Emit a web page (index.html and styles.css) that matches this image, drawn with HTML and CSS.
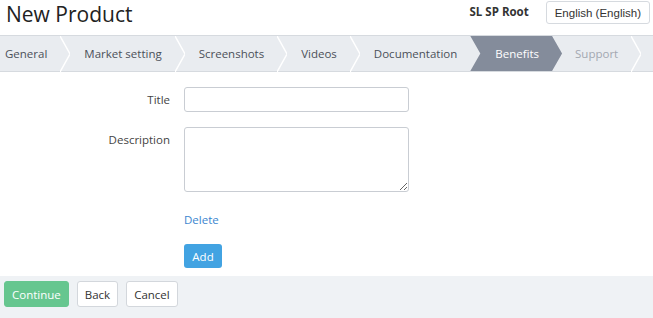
FILE: index.html
```html
<!DOCTYPE html>
<html>
<head>
<meta charset="utf-8">
<link rel="stylesheet" href="styles.css">
</head>
<body>
<header class="top">
  <h1 class="title">New Product</h1>
  <div class="account">
    <span class="user">SL SP Root</span>
    <button class="lang">English (English)</button>
  </div>
</header>
<nav class="steps">
  <span class="step">General</span><span class="sep"><svg width="10" height="36" viewBox="0 0 10 36"><polyline points="0,0 10,18 0,36" fill="none" stroke="#fff" stroke-width="1.5"/></svg></span>
  <span class="step">Market setting</span><span class="sep"><svg width="10" height="36" viewBox="0 0 10 36"><polyline points="0,0 10,18 0,36" fill="none" stroke="#fff" stroke-width="1.5"/></svg></span>
  <span class="step">Screenshots</span><span class="sep"><svg width="10" height="36" viewBox="0 0 10 36"><polyline points="0,0 10,18 0,36" fill="none" stroke="#fff" stroke-width="1.5"/></svg></span>
  <span class="step">Videos</span><span class="sep"><svg width="10" height="36" viewBox="0 0 10 36"><polyline points="0,0 10,18 0,36" fill="none" stroke="#fff" stroke-width="1.5"/></svg></span>
  <span class="step">Documentation</span>
  <span class="step active">Benefits</span>
  <span class="step disabled">Support</span><span class="sep"><svg width="10" height="36" viewBox="0 0 10 36"><polyline points="0,0 10,18 0,36" fill="none" stroke="#fff" stroke-width="1.5"/></svg></span>
</nav>
<main class="form">
  <div class="row">
    <label class="label">Title</label>
    <input class="input" type="text">
  </div>
  <div class="row">
    <label class="label">Description</label>
    <textarea class="textarea"></textarea>
  </div>
  <div class="row">
    <span class="label"></span>
    <a class="link" href="#">Delete</a>
  </div>
  <div class="row">
    <span class="label"></span>
    <button class="btn-add">Add</button>
  </div>
</main>
<footer class="actions">
  <button class="btn btn-primary">Continue</button>
  <button class="btn">Back</button>
  <button class="btn">Cancel</button>
</footer>
</body>
</html>
```
FILE: styles.css
```css
* { box-sizing: border-box; }
html, body { margin: 0; padding: 0; background: #fff; }
body {
  font-family: "Open Sans", "Liberation Sans", sans-serif;
  font-size: 11.5px;
  color: #333;
  width: 653px;
  height: 318px;
  overflow: hidden;
}
.top {
  display: flex;
  justify-content: space-between;
  align-items: flex-start;
  height: 35px;
}
.title {
  margin: 0;
  padding: 0 0 0 6px;
  font-size: 21px;
  font-weight: 400;
  line-height: 28px;
  color: #222;
}
.account {
  display: flex;
  align-items: center;
  padding-top: 1px;
  padding-right: 3px;
}
.user {
  font-weight: 700;
  font-size: 11.5px;
  color: #333;
  margin-right: 17px;
  margin-top: -2px;
}
.lang {
  font-family: "Liberation Sans", Arial, sans-serif;
  font-size: 11.5px;
  color: #333;
  background: #fff;
  border: 1px solid #d6dadf;
  border-radius: 3px;
  height: 23px;
  padding: 0 8px;
}
.steps {
  display: flex;
  align-items: stretch;
  height: 37px;
  background: #e9ecf0;
  border-top: 1px solid #d6dadf;
  border-bottom: 1px solid #d6dadf;
  white-space: nowrap;
}
.step {
  display: flex;
  align-items: center;
  padding: 0 13px 0 14px;
  color: #4b5059;
  font-size: 11.5px;
}
.step:first-child { padding-left: 5px; }
.sep { display: flex; align-items: center; }
.sep svg { display: block; }
.step.active {
  background: #848c9b;
  color: #fff;
  padding: 0 23px 0 25px;
  margin-right: -10px;
  clip-path: polygon(0 0, calc(100% - 10px) 0, 100% 50%, calc(100% - 10px) 100%, 0 100%, 10px 50%);
}
.step.disabled { color: #a3a8b0; padding-left: 23px; }
.form {
  padding-top: 15px;
  height: 204px;
}
.row {
  display: flex;
  align-items: flex-start;
  margin-bottom: 15px;
}
.label {
  width: 170px;
  flex: none;
  text-align: right;
  margin-right: 14px;
  font-size: 11.5px;
  color: #444;
  line-height: 25px;
}
.input {
  width: 225px;
  height: 25px;
  border: 1px solid #c9cdd3;
  border-radius: 3px;
  margin: 0;
}
.textarea {
  width: 225px;
  height: 65px;
  border: 1px solid #c9cdd3;
  border-radius: 3px;
  margin: 0;
  resize: vertical;
  font-family: inherit;
}
.link {
  color: #3b86cf;
  text-decoration: none;
  font-size: 11.5px;
  line-height: 16px;
  margin-top: 5px;
}
.btn-add {
  background: #42a3e2;
  color: #fff;
  border: none;
  border-radius: 3px;
  height: 24px;
  width: 38px;
  padding: 0;
  font-family: inherit;
  font-size: 11.5px;
  margin-top: 1px;
}
.actions {
  display: flex;
  gap: 8px;
  background: #eff2f5;
  padding: 5px 4px;
  height: 42px;
}
.btn {
  font-family: inherit;
  font-size: 11.5px;
  height: 26px;
  border: 1px solid #d3d7dc;
  background: #fff;
  color: #333;
  border-radius: 3px;
  padding: 0 7px;
}
.btn-primary {
  background: #66c68f;
  border-color: #66c68f;
  color: #fff;
}
```
